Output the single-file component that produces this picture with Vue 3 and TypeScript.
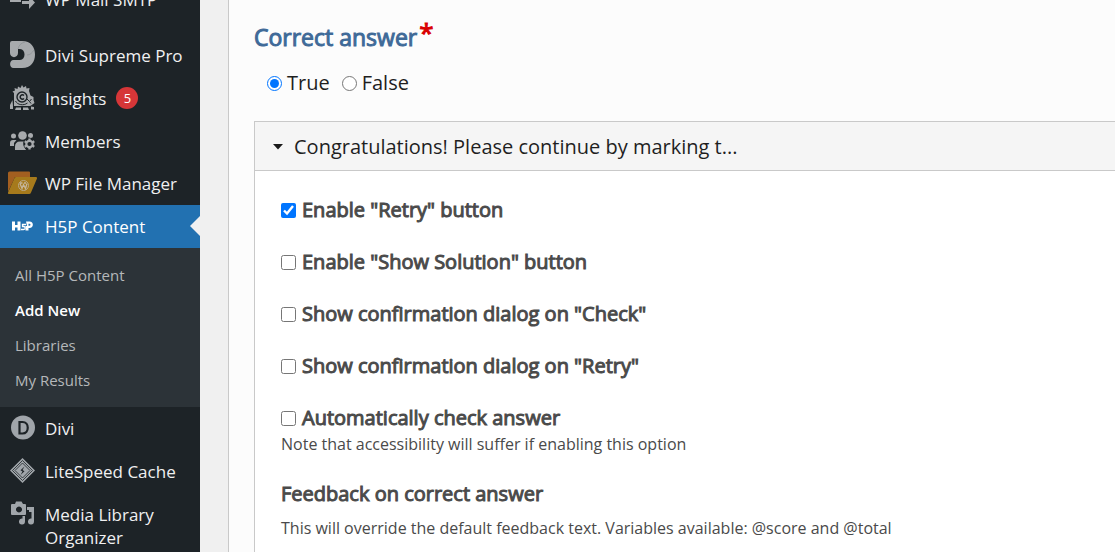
<script setup lang="ts">
import { ref } from 'vue'

interface NavItem {
  label: string
  icon: string
  badge?: number
}

interface Option {
  id: string
  label: string
  checked: boolean
  note?: string
}

const upperItems: NavItem[] = [
  { label: 'Divi Supreme Pro', icon: 'supreme' },
  { label: 'Insights', icon: 'insights', badge: 5 },
  { label: 'Members', icon: 'members' },
  { label: 'WP File Manager', icon: 'files' },
]

const subItems: string[] = ['All H5P Content', 'Add New', 'Libraries', 'My Results']
const currentSub = 'Add New'

const lowerItems: NavItem[] = [
  { label: 'Divi', icon: 'divi' },
  { label: 'LiteSpeed Cache', icon: 'litespeed' },
  { label: 'Media Library Organizer', icon: 'media' },
]

const answer = ref<'true' | 'false'>('true')
const expanded = ref(true)

const options = ref<Option[]>([
  { id: 'retry', label: 'Enable "Retry" button', checked: true },
  { id: 'solution', label: 'Enable "Show Solution" button', checked: false },
  { id: 'confirm-check', label: 'Show confirmation dialog on "Check"', checked: false },
  { id: 'confirm-retry', label: 'Show confirmation dialog on "Retry"', checked: false },
  {
    id: 'auto-check',
    label: 'Automatically check answer',
    checked: false,
    note: 'Note that accessibility will suffer if enabling this option',
  },
])
</script>

<template>
  <div class="page">
    <nav class="sidebar" aria-label="Main menu">
      <a href="#" class="item first">
        <svg class="icon" viewBox="0 0 28 28" aria-hidden="true">
          <path fill="#a7aaad" d="M2 13h11v4H2zM14 16h7v-5l6 6.500-6 6.500v-5h-7z" />
        </svg>
        <span class="label">WP Mail SMTP</span>
      </a>

      <div class="group">
        <a v-for="item in upperItems" :key="item.icon" href="#" class="item">
          <svg v-if="item.icon === 'supreme'" class="icon" viewBox="0 0 28 28" aria-hidden="true">
            <path
              fill="#a7aaad"
              d="M4 0H14C23 0 27 6 27 13.500S23 27 14 27H5.500C1 27 1 19 5.500 19H12C18 19 18 8 12 8H10V12C10 17.500 2 17.500 2 12V2Q2 0 4 0z"
            />
            <path fill="none" stroke="#8b8f93" stroke-width=".7" d="M10 8C11 4 13 2 17 1M19 14c3 0 5-2 7-5" />
          </svg>
          <svg v-else-if="item.icon === 'insights'" class="icon" viewBox="0 0 28 28" aria-hidden="true">
            <path
              fill="#a7aaad"
              d="M6 21V9L4.500 7.500 7 6.500 6.500 4l3 1 .5-2.500 2.500 1.500L14 1l1.500 2.500L18 2l.5 2.500L21.500 4 21 7l1.500 4.500 3 1.500v3l1 3-3.500 2.500L22 22H6zM2 25v-4l2.500-5L5 22v3zM8 23.500h5V26H7zM15 23.500h5l1 2.500h-6zM23 22.500l3 .5v2.500h-3z"
            />
            <circle cx="14" cy="13" r="5" fill="none" stroke="#1d2327" stroke-width="1.400" />
            <path fill="none" stroke="#1d2327" stroke-width="1.500" d="M16 11.500a2.200 2.200 0 1 0 0 3" />
            <path fill="none" stroke="#1d2327" stroke-width="1" d="M7.500 17c2 4 8 5 12 2M19 15l2.500 2.500 2-2.500M21.500 17.500l1.500 2" />
          </svg>
          <svg v-else-if="item.icon === 'members'" class="icon" viewBox="0 0 28 28" aria-hidden="true">
            <g fill="#a7aaad">
              <circle cx="5.500" cy="9" r="2.500" />
              <circle cx="14.500" cy="8.500" r="4.300" />
              <circle cx="22.500" cy="8.500" r="2.500" />
              <path d="M2 19v-3q0-3 3-3h3.500L6 16v3zM7 23v-3q0-5.500 5-5.500h5l-1 4 2 4.500z" />
            </g>
            <circle cx="21.500" cy="17" r="6.300" fill="#1d2327" />
            <circle cx="21.500" cy="17" r="3.200" fill="none" stroke="#a7aaad" stroke-width="2.200" />
            <path
              stroke="#a7aaad"
              stroke-width="2.300"
              d="M21.500 11.500v2M21.500 20.500v2M16.700 14.200l1.800 1.100M24.500 18.700l1.800 1.100M16.700 19.800l1.800-1.100M24.500 15.300l1.800-1.100"
            />
          </svg>
          <svg v-else class="icon" viewBox="0 0 28 28" aria-hidden="true">
            <path fill="#a35f20" d="M0 4q0-1.500 1.500-1.500H21q1 0 1 1V8H7L0 23z" />
            <path fill="#a67a1c" d="M6.500 9Q7 8 8 8h20q1.500 0 1 1.500L23 23.500Q22.500 25 21 25H1q-1.500 0-1-1.500z" />
            <circle cx="15.500" cy="16.500" r="5" fill="none" stroke="#b9a88a" stroke-width="1" />
            <path fill="none" stroke="#c5b69c" stroke-width="1.300" d="M12 14.500l2 5 1.500-4 2 4 1.500-5M12 14h2.500M16 14h2" />
          </svg>
          <span class="label">{{ item.label }}</span>
          <span v-if="item.badge" class="badge">{{ item.badge }}</span>
        </a>
      </div>

      <a href="#" class="item active">
        <svg class="icon" viewBox="0 0 28 28" aria-hidden="true">
          <path
            fill="#fff"
            fill-rule="evenodd"
            d="M4 9.500h3v3.500h2.500V9.500h3v9h-3v-3H7v3H4zM18 9.500h3.500c4.500 0 4.500 6.500 0 6.500H20.500v2.500h-3V14h1.500zM20.500 11.700v2h1c1.300 0 1.300-2 0-2z"
          />
          <path fill="none" stroke="#fff" stroke-width="1.300" d="M18 12.500h-3.500v2h1c2.300 0 2.300 3 0 3h-2.500" />
        </svg>
        <span class="label">H5P Content</span>
      </a>

      <div class="submenu">
        <a v-for="sub in subItems" :key="sub" href="#" class="sub" :class="{ current: sub === currentSub }">{{ sub }}</a>
      </div>

      <a v-for="item in lowerItems" :key="item.icon" href="#" class="item">
        <svg v-if="item.icon === 'divi'" class="icon" viewBox="0 0 28 28" aria-hidden="true">
          <circle cx="15" cy="13.500" r="12" fill="#a0a5aa" />
          <path fill="none" stroke="#1d2327" stroke-width="2.200" d="M11.500 8h3c7 0 7 11.500 0 11.500h-3z" />
        </svg>
        <svg v-else-if="item.icon === 'litespeed'" class="icon" viewBox="0 0 28 28" aria-hidden="true">
          <path fill="#a0a5aa" d="M14.500 1L27 13.500 14.500 26 2 13.500z" />
          <path fill="none" stroke="#1d2327" stroke-width=".8" d="M14.500 3.500l10 10-10 10-10-10zM14.500 6l7.500 7.500-7.500 7.500L7 13.500z" />
          <path fill="#1d2327" d="M16.500 9.500l-4 3.700 2 1.300-2 3.500 4-3.700-2-1.300z" />
        </svg>
        <svg v-else class="icon" viewBox="0 0 28 28" aria-hidden="true">
          <path
            fill="#a0a5aa"
            fill-rule="evenodd"
            d="M4 4h3l1-2.500h5.500L15 4h2q1 0 1 1v9q0 1-1 1H4q-1 0-1-1V5q0-1 1-1zM11 6.500a3 3 0 1 0 .01 0z"
          />
          <path fill="#a0a5aa" d="M19 7h7v14.500a3 3 0 1 1-2.500-3V12H21v-2h-2zM14.500 16h2.500v5.500a3 3 0 1 1-2.500-3z" />
        </svg>
        <span class="label">{{ item.label }}</span>
      </a>
    </nav>

    <main class="editor">
      <fieldset class="answer">
        <legend>Correct answer<span class="required">*</span></legend>
        <div class="choices">
          <label class="choice"><input v-model="answer" type="radio" name="answer" value="true" />True</label>
          <label class="choice"><input v-model="answer" type="radio" name="answer" value="false" />False</label>
        </div>
      </fieldset>

      <section class="panel">
        <button type="button" class="panel-head" :aria-expanded="expanded" @click="expanded = !expanded">
          <svg class="caret" viewBox="0 0 10 6" aria-hidden="true"><path fill="#1a1a1a" d="M0 0h10L5 5.500z" /></svg>
          <span>Congratulations! Please continue by marking t...</span>
        </button>
        <div v-show="expanded" class="panel-body">
          <div v-for="option in options" :key="option.id" class="option">
            <label class="option-label">
              <input v-model="option.checked" type="checkbox" :name="option.id" />
              <span class="strong">{{ option.label }}</span>
            </label>
            <p v-if="option.note" class="note">{{ option.note }}</p>
          </div>
          <div class="feedback">
            <h2 class="strong">Feedback on correct answer</h2>
            <p class="note">This will override the default feedback text. Variables available: @score and @total</p>
          </div>
        </div>
      </section>
    </main>
  </div>
</template>

<style>
body {
  margin: 0;
  background: #f0f0f1;
}
</style>

<style scoped>
.page {
  display: flex;
  height: 100vh;
  overflow: hidden;
  font-family: 'Open Sans', sans-serif;
  background: #f0f0f0;
}

.sidebar {
  flex: 0 0 200px;
  background: #1d2327;
}

.item {
  position: relative;
  display: flex;
  align-items: flex-start;
  box-sizing: border-box;
  min-height: 43px;
  padding: 10px 12px 10px 8px;
  color: #f0f0f1;
  font-size: 17px;
  line-height: 23px;
  text-decoration: none;
}

.first {
  margin: -22px 0 13px;
}

.group {
  display: grid;
  grid-template-rows: repeat(4, 1fr);
  height: 171px;
}

.group .item {
  min-height: 0;
}

.icon {
  flex: none;
  width: 28px;
  height: 28px;
  margin: -3px 9px -2px 0;
  overflow: visible;
}

.badge {
  width: 22px;
  margin-left: 10px;
  border-radius: 11px;
  background: #d63638;
  color: #fff;
  font-size: 13px;
  line-height: 22px;
  text-align: center;
}

.active {
  background: #2271b1;
  color: #fff;
}

.active::after {
  content: '';
  position: absolute;
  top: 11px;
  right: 0;
  border: 10px solid transparent;
  border-left-width: 0;
  border-right-color: #f0f0f1;
}

.submenu {
  display: flex;
  flex-direction: column;
  padding: 10px 0 9px;
  background: #2c3338;
}

.sub {
  padding: 6px 15px;
  color: #b5b8ba;
  font-size: 15px;
  line-height: 23px;
  text-decoration: none;
}

.current {
  color: #fff;
  font-weight: 600;
}

.editor {
  flex: 1;
  min-width: 0;
  margin-left: 28px;
  padding: 19px 0 0 25px;
  border-left: 1px solid #c9c9c9;
  background: #fcfcfc;
  color: #1f1f1f;
  font-size: 20px;
}

.answer {
  margin: 0;
  padding: 0;
  border: 0;
}

legend {
  padding: 0;
  color: #3f6a98;
  font-size: 23px;
  line-height: 34px;
  -webkit-text-stroke: 1px currentColor;
}

.required {
  margin-left: 2px;
  color: #d90000;
  font-size: 26px;
  line-height: 1;
  vertical-align: 4px;
}

.choices {
  display: flex;
  gap: 12px;
  padding: 15px 0 0 13px;
}

.choice {
  display: flex;
  align-items: center;
  gap: 5px;
  line-height: 28px;
}

input {
  width: 15px;
  height: 15px;
  margin: 0;
}

.panel {
  margin-top: 24px;
  border: 1px solid #c9c9c9;
  border-right: 0;
  background: #fff;
}

.panel-head {
  display: flex;
  align-items: center;
  gap: 11px;
  width: 100%;
  padding: 11px 18px 9px;
  border: 0;
  border-bottom: 1px solid #c9c9c9;
  background: #f5f5f5;
  color: #1f1f1f;
  font: inherit;
  line-height: 28px;
  text-align: left;
}

.caret {
  width: 10px;
  height: 6px;
}

.panel-body {
  display: flex;
  flex-direction: column;
  gap: 24px;
  padding: 25px 26px;
}

.option-label {
  display: flex;
  align-items: center;
  gap: 6px;
  line-height: 28px;
}

.strong {
  margin: 0;
  color: #4a4a4a;
  font-size: 20px;
  font-weight: 400;
  line-height: 28px;
  -webkit-text-stroke: 1px currentColor;
}

.note {
  margin: 0;
  color: #4a4a4a;
  font-size: 16px;
  line-height: 24px;
}

.feedback .note {
  margin-top: 8px;
}
</style>
